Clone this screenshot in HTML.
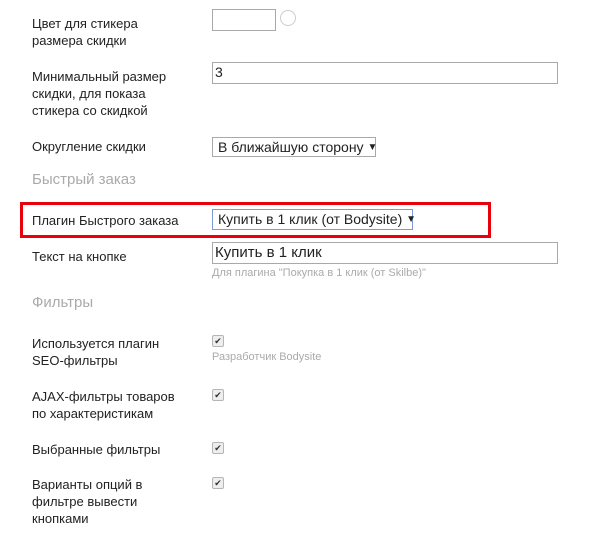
<!DOCTYPE html><html><head><meta charset="utf-8"><style>
body{margin:0;width:609px;height:533px;background:#fff;font-family:"Liberation Sans",Arial,sans-serif;font-size:13px;color:#222;position:relative;overflow:hidden}
.a{position:absolute;line-height:17px;white-space:nowrap}
.h{color:#aaa;font-size:15px}
.s{color:#aaa;font-size:11px}
.box{position:absolute;border:1px solid #a9a9a9;box-sizing:border-box;background:#fff}
.cb{position:absolute;width:12px;height:12px;border:1px solid #b5b5b5;border-radius:2px;background:#eee;box-sizing:border-box;font-size:9px;line-height:10px;text-align:center;color:#333}
.v{position:absolute;font-size:14px;line-height:18px;white-space:nowrap}
</style></head><body>
<div class="a" style="left:32px;top:15px">Цвет для стикера<br>размера скидки</div>
<div class="box" style="left:212px;top:9px;width:64px;height:22px"></div>
<div style="position:absolute;left:280px;top:10px;width:14px;height:14px;border:1px solid #ccc;border-radius:50%"></div>
<div class="a" style="left:32px;top:68px">Минимальный размер<br>скидки, для показа<br>стикера со скидкой</div>
<div class="box" style="left:212px;top:62px;width:346px;height:22px"></div>
<div class="v" style="left:215px;top:63px">3</div>
<div class="a" style="left:32px;top:138px">Округление скидки</div>
<div class="box" style="left:212px;top:137px;width:164px;height:20px"></div>
<div class="v" style="left:218px;top:138px">В ближайшую сторону <span style="font-size:10px;vertical-align:2px">▼</span></div>
<div class="a h" style="left:32px;top:171px">Быстрый заказ</div>
<div style="position:absolute;left:20px;top:202px;width:471px;height:36px;border:3px solid #e8000b;box-sizing:border-box"></div>
<div class="a" style="left:32px;top:212px">Плагин Быстрого заказа</div>
<div class="box" style="left:212px;top:209px;width:201px;height:21px;border-color:#7d9ad6"></div>
<div class="v" style="left:218px;top:210px">Купить в 1 клик (от Bodysite) <span style="font-size:10px;vertical-align:2px">▼</span></div>
<div class="a" style="left:32px;top:248px">Текст на кнопке</div>
<div class="box" style="left:212px;top:242px;width:346px;height:22px"></div>
<div class="v" style="left:215px;top:244px;font-size:15px">Купить в 1 клик</div>
<div class="a s" style="left:212px;top:265px">Для плагина "Покупка в 1 клик (от Skilbe)"</div>
<div class="a h" style="left:32px;top:294px">Фильтры</div>
<div class="a" style="left:32px;top:335px">Используется плагин<br>SEO-фильтры</div>
<div class="cb" style="left:212px;top:335px">✔</div>
<div class="a s" style="left:212px;top:349px">Разработчик Bodysite</div>
<div class="a" style="left:32px;top:388px">AJAX-фильтры товаров<br>по характеристикам</div>
<div class="cb" style="left:212px;top:389px">✔</div>
<div class="a" style="left:32px;top:441px">Выбранные фильтры</div>
<div class="cb" style="left:212px;top:442px">✔</div>
<div class="a" style="left:32px;top:476px">Варианты опций в<br>фильтре вывести<br>кнопками</div>
<div class="cb" style="left:212px;top:477px">✔</div>
</body></html>
